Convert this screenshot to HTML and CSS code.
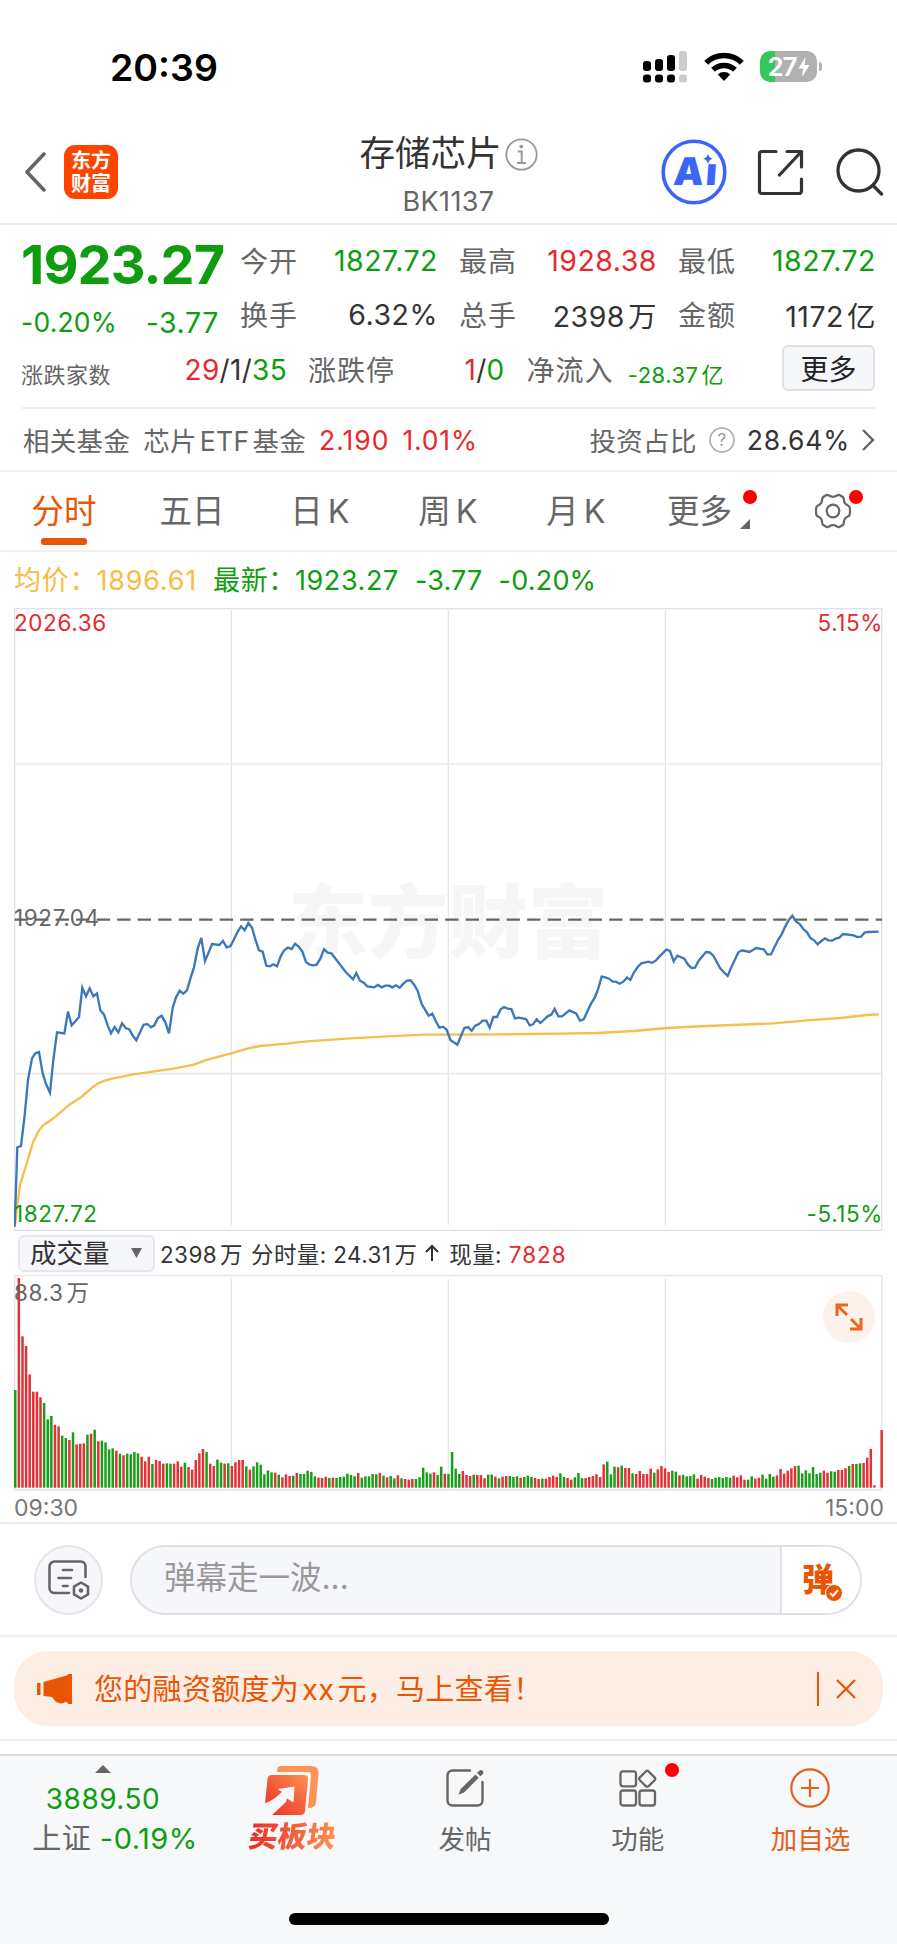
FILE: index.html
```html
<!DOCTYPE html>
<html lang="zh-CN">
<head>
    <meta charset="UTF-8">
    <meta name="viewport" content="width=device-width, initial-scale=1.0">
    <title>存储芯片 BK1137</title>
    <link rel="stylesheet" href="styles.css">
</head>
<body>

    <!-- Status bar -->
    <div class="status-bar">
        <span class="clock">20:39</span>
        <div class="status-icons">
            <svg class="signal" width="44" height="32" viewBox="0 0 44 32">
                <g fill="#000">
                    <rect x="0" y="10" width="8" height="10" rx="3"/>
                    <rect x="12" y="8" width="8" height="12" rx="3"/>
                    <rect x="24" y="4" width="8" height="16" rx="3"/>
                    <rect x="0" y="23.500" width="8" height="8" rx="3"/>
                    <rect x="12" y="23.500" width="8" height="8" rx="3"/>
                    <rect x="24" y="23.500" width="8" height="8" rx="3"/>
                </g>
                <g fill="#ccc">
                    <rect x="36" y="0" width="8" height="20" rx="3"/>
                    <rect x="36" y="23.500" width="8" height="8" rx="3"/>
                </g>
            </svg>
            <svg class="wifi" width="40" height="29" viewBox="0 0 40 29">
                <g fill="none" stroke="#000" stroke-width="5.5">
                    <path d="M2.2 10.8a25.5 25.5 0 0 1 35.6 0"/>
                    <path d="M9 17.8a16 16 0 0 1 22 0"/>
                </g>
                <path d="M20 29l-6.2-6.4a9 9 0 0 1 12.4 0z"/>
            </svg>
            <div class="battery">
                <span>27</span>
                <svg width="12" height="20" viewBox="0 0 11 20"><path d="M7 0L0 11.5h4.6L3.6 20 11 8H6.2z" fill="#fff"/></svg>
            </div>
        </div>
    </div>

    <!-- Header -->
    <header class="header">
        <div class="header-left">
            <svg width="22" height="40" viewBox="0 0 22 40"><path d="M20 2L3 20l17 18" fill="none" stroke="#666" stroke-width="3.6" stroke-linecap="round" stroke-linejoin="round"/></svg>
            <div class="app-logo">东方<br>财富</div>
        </div>
        <div class="header-title">
            <h1>存储芯片
                <svg width="33" height="33" viewBox="0 0 33 33">
                    <circle cx="16.5" cy="16.5" r="15.2" fill="none" stroke="#999" stroke-width="1.8"/>
                    <circle cx="16.3" cy="8.6" r="1.9" fill="#999"/>
                    <path d="M12.8 13.4h3.9v11.4M12 24.9h9" fill="none" stroke="#999" stroke-width="2"/>
                </svg>
            </h1>
            <p>BK1137</p>
        </div>
        <div class="header-right">
            <svg width="66" height="66" viewBox="0 0 66 66">
                <circle cx="33" cy="33" r="30.8" fill="none" stroke="#3a66f5" stroke-width="3.6"/>
                <text class="ai-text" x="12" y="46" transform="skewX(-4) translate(3 0)">Aı</text>
                <path d="M47 14.500c.8 3.200 1.800 4.300 5 5.200-3.200.9-4.200 2-5 5.200-.8-3.200-1.800-4.300-5-5.200 3.200-.9 4.200-2 5-5.200z" fill="#3a66f5"/>
            </svg>
            <svg class="share" width="48" height="48" viewBox="0 0 48 48">
                <path d="M19 3.500H5a2.500 2.500 0 0 0-2.500 2.500v37A2.500 2.500 0 0 0 5 45.500h37a2.500 2.500 0 0 0 2.500-2.500V31M30 3.500h14.500V19M44 4L22.500 27" fill="none" stroke="#333" stroke-width="3.200" stroke-linecap="round" stroke-linejoin="round"/>
            </svg>
            <svg width="48" height="48" viewBox="0 0 48 48">
                <g fill="none" stroke="#333" stroke-width="3.300" stroke-linecap="round"><circle cx="22.500" cy="22.500" r="20.500"/><path d="M37 37.500l8.500 8.500"/></g>
            </svg>
        </div>
    </header>

    <!-- Quote -->
    <section class="quote">
        <div class="quote-main">
            <div class="price-box">
                <div class="price">1923.27</div>
                <div class="change"><span>-0.20%</span><span class="change-value">-3.77</span></div>
            </div>
            <div class="quote-grid">
                <div class="cell"><label>今开</label><span class="green">1827.72</span></div>
                <div class="cell"><label>最高</label><span class="red">1928.38</span></div>
                <div class="cell"><label>最低</label><span class="green">1827.72</span></div>
                <div class="cell"><label>换手</label><span>6.32%</span></div>
                <div class="cell"><label>总手</label><span>2398<i class="thin"></i>万</span></div>
                <div class="cell"><label>金额</label><span>1172<i class="thin"></i>亿</span></div>
            </div>
        </div>
        <div class="quote-extra">
            <div class="cell updown"><label class="small">涨跌家数</label><span class="ratio"><b class="red">29</b>/1/<b class="green">35</b></span></div>
            <div class="cell limit"><label>涨跌停</label><span class="ratio"><b class="red">1</b>/<b class="green">0</b></span></div>
            <div class="cell flow"><label>净流入</label><span class="green small">-28.37<i class="thin"></i>亿</span></div>
            <button class="more-btn">更多</button>
        </div>
        <div class="fund">
            <span class="fund-label">相关基金</span>
            <span class="fund-name">芯片<i class="thin"></i>ETF<i class="thin"></i>基金</span>
            <span class="red fund-price">2.190</span>
            <span class="red num">1.01%</span>
            <span class="fund-ratio">投资占比</span>
            <svg class="help" width="26" height="26" viewBox="0 0 26 26">
                <circle cx="13" cy="13" r="12" fill="none" stroke="#aaa" stroke-width="1.600"/>
                <text x="13" y="18.500" text-anchor="middle" class="help-text">?</text>
            </svg>
            <span class="dark num">28.64%</span>
            <svg class="fund-arrow" width="14" height="24" viewBox="0 0 14 24"><path d="M2 2l10 10L2 22" fill="none" stroke="#666" stroke-width="2.400"/></svg>
        </div>
    </section>

    <!-- Period tabs -->
    <nav class="tabs">
        <a class="tab active">分时</a>
        <a class="tab">五日</a>
        <a class="tab">日<i class="thin"></i>K</a>
        <a class="tab">周<i class="thin"></i>K</a>
        <a class="tab">月<i class="thin"></i>K</a>
        <a class="tab tab-more">更多
            <svg class="corner" width="10" height="10" viewBox="0 0 10 10"><path d="M10 0v10H0z" fill="#666"/></svg>
            <i class="dot"></i>
        </a>
        <a class="tab tab-gear">
            <svg width="38" height="36" viewBox="0 0 38 36">
                <path d="M12.500 2c2-.8 2.800 1.800 6.500 1.800S23.500 1.200 25.500 2l3.300 2c1.800 1.300.4 3.200 1.900 5.900s4.200 2 4.900 4.200c.5 2.200.5 5.600 0 7.800-.7 2.200-3.400 1.500-4.900 4.200s-.1 4.600-1.900 5.900l-3.300 2c-2 .8-2.800-1.800-6.500-1.800S14.500 34.800 12.500 34l-3.300-2c-1.800-1.300-.4-3.200-1.900-5.900s-4.200-2-4.900-4.200c-.5-2.200-.5-5.600 0-7.800.7-2.200 3.400-1.500 4.900-4.200S7.400 5.300 9.200 4z" fill="none" stroke="#666" stroke-width="2.200"/>
                <circle cx="19" cy="18" r="6.300" fill="none" stroke="#666" stroke-width="2.200"/>
            </svg>
            <i class="dot"></i>
        </a>
    </nav>

    <!-- Intraday chart -->
    <div class="legend">
        <span class="avg">均价：</span><span class="avg avg-value">1896.61</span>
        <span class="green">最新：</span><span class="green">1923.27</span>
        <span class="green diff">-3.77</span>
        <span class="green diff">-0.20%</span>
    </div>

    <div class="price-chart">
        <svg width="869" height="623" viewBox="0 0 2607 1869">
            <text class="watermark" x="822" y="1030">东方财富</text>
            <g fill="none" stroke="#dfe2ea" stroke-width="4">
                <path d="M652 6V1851M1303 6V1851M1954 6V1851" stroke="#e3e5ec"/>
                <path d="M2 468H2604M2 1397H2604" stroke="#e8eaf0" stroke-width="5"/>
                <rect x="2" y="2" width="2601" height="1865"/>
            </g>
            <path d="M2 935H2604" stroke="#666" stroke-width="7" stroke-dasharray="40 21.500" fill="none"/>
            <polyline id="avgLine" fill="none" stroke="#f7bd4f" stroke-width="7" stroke-linejoin="round"/>
            <polyline id="priceLine" fill="none" stroke="#3c76bb" stroke-width="7"/>
        </svg>
        <span class="axis top left red">2026.36</span>
        <span class="axis top right red">5.15%</span>
        <span class="axis middle left">1927.04</span>
        <span class="axis bottom left green">1827.72</span>
        <span class="axis bottom right green">-5.15%</span>
    </div>

    <!-- Volume -->
    <div class="volume-bar">
        <button class="volume-btn">成交量 <svg width="11" height="10" viewBox="0 0 11 10"><path d="M0 0h11L5.500 10z" fill="#666"/></svg></button>
        <span>2398<i class="thin"></i>万</span>
        <span>分时量: 24.31<i class="thin"></i>万</span>
        <svg class="up" width="14" height="18" viewBox="0 0 14 18"><path d="M7 17V2M1 8l6-6 6 6" fill="none" stroke="#333" stroke-width="2"/></svg>
        <span>现量: <b class="red">7828</b></span>
    </div>

    <div class="volume-chart">
        <span class="axis vol-max left">88.3<i class="thin"></i>万</span>
        <svg width="869" height="216" viewBox="0 0 2607 648">
            <g fill="none" stroke="#e3e5ec" stroke-width="4">
                <path d="M652 12V640M1303 12V640M1954 12V640"/>
                <path d="M2 2H2603V645H2z"/>
            </g>
            <g id="volumeBars"></g>
        </svg>
        <div class="expand">
            <svg width="28" height="28" viewBox="0 0 28 28"><path d="M12 12L3 3M2 13V2h11M16 16l9 9M26 15v11H15" fill="none" stroke="#e8681f" stroke-width="3"/></svg>
        </div>
    </div>
    <div class="time-axis"><span>09:30</span><span>15:00</span></div>

    <!-- Bullet comments -->
    <div class="danmu">
        <div class="danmu-setting">
            <svg width="42" height="40" viewBox="0 0 42 40">
                <g fill="none" stroke="#666" stroke-width="2.600" stroke-linecap="round">
                    <path d="M21 33H6.500A5 5 0 0 1 1.500 28V6.500a5 5 0 0 1 5-5h26a5 5 0 0 1 5 5V17"/>
                    <path d="M15 10h9M10.500 18h12.500M15 26h4.500"/>
                    <path d="M33 22.500l7 4.200v7.600l-7 4.200-7-4.200v-7.600z" stroke-linejoin="round"/>
                </g>
                <circle cx="33" cy="30.500" r="2.300" fill="#666"/>
            </svg>
        </div>
        <div class="danmu-input">
            <span class="placeholder">弹幕走一波...</span>
            <div class="danmu-toggle">弹
                <svg width="18" height="18" viewBox="0 0 18 18"><circle cx="9" cy="9" r="8.500" fill="#ea5504" stroke="#fff"/><path d="M5 9l3 3 5-6" fill="none" stroke="#fff" stroke-width="2"/></svg>
            </div>
        </div>
    </div>

    <!-- Notice -->
    <div class="notice-wrap">
        <div class="notice">
            <svg width="35" height="30" viewBox="0 0 35 30"><path d="M0 9h3.500v12H0zM6.500 8L31 1V0h4v30h-4v-1l-3-1.300c-2 2.600-6 1.800-8.500.3-2-1-2.500-3-4.500-5L6.500 22z" fill="#ea5504"/></svg>
            <span>您的融资额度为<i class="thin"></i>xx<i class="thin"></i>元，马上查看！</span>
            <i class="notice-line"></i>
            <svg class="close" width="20" height="20" viewBox="0 0 20 20"><path d="M1 1l18 18M19 1L1 19" stroke="#ea5504" stroke-width="2.200"/></svg>
        </div>
    </div>

    <!-- Bottom bar -->
    <footer class="bottom-bar">
        <div class="index-box">
            <svg width="16" height="8" viewBox="0 0 16 8"><path d="M8 0l8 8H0z" fill="#666"/></svg>
            <p class="green">3889.50</p>
            <p>上证 <span class="green">-0.19%</span></p>
        </div>
        <div class="item buy">
            <svg width="56" height="50" viewBox="0 0 56 50">
                <defs>
                    <linearGradient id="buyGrad" x1="0" y1="1" x2="1" y2="0">
                        <stop offset="0" stop-color="#ec2b27"/>
                        <stop offset="1" stop-color="#fb9250"/>
                    </linearGradient>
                </defs>
                <path d="M16 0h31q8 0 7.500 7L52 36q-.4 6-8 6l3-32q.3-4-3.500-4H13q.3-6 3-6z" fill="#fc9455"/>
                <path d="M8 9h32q4.500 0 4 4.500L41 45q-.4 4-4.500 4H8l14-13 1-3.500 6.500 4L30.500 20.500 14 23l4 3C13 31 6 36 1 37L3.500 13Q4 9 8 9z" fill="url(#buyGrad)"/>
            </svg>
            <span>买板块</span>
        </div>
        <div class="item">
            <svg width="40" height="40" viewBox="0 0 40 40">
                <path d="M25 2.500H7.500a5 5 0 0 0-5 5v25a5 5 0 0 0 5 5h25a5 5 0 0 0 5-5V14" fill="none" stroke="#666" stroke-width="2.400" stroke-linecap="round"/>
                <path d="M30.500 6.500l3.300 3.300L19 24.500l-5.500 2.300 2-5.500zM32 5l2.500-2.500q2-1 3.200.3t.3 3.200L35.300 8.300z" fill="#666"/>
            </svg>
            <span>发帖</span>
        </div>
        <div class="item">
            <svg width="40" height="40" viewBox="0 0 40 40">
                <g fill="none" stroke="#666" stroke-width="2.300">
                    <rect x="2.500" y="3.300" width="15.500" height="15" rx="2.500"/>
                    <rect x="2.500" y="22.500" width="15.500" height="15" rx="2.500"/>
                    <rect x="21.500" y="22.500" width="15.500" height="15" rx="2.500"/>
                    <rect x="23" y="4.600" width="12.400" height="12.400" rx="2" transform="rotate(45 29.200 10.800)"/>
                </g>
            </svg>
            <i class="dot"></i>
            <span>功能</span>
        </div>
        <div class="item add">
            <svg width="40" height="40" viewBox="0 0 40 40">
                <circle cx="20" cy="20" r="18.700" fill="none" stroke="#e2601c" stroke-width="2.200"/>
                <path d="M20 11v18M11 20h18" stroke="#e2601c" stroke-width="2.200"/>
            </svg>
            <span>加自选</span>
        </div>
        <div class="home-indicator"></div>
    </footer>

    <script src="chart.js"></script>
</body>
</html>
```
FILE: styles.css
```css
* {
    margin: 0;
    padding: 0;
    box-sizing: border-box;
}

body {
    width: 897px;
    height: 1944px;
    overflow: hidden;
    background-color: #fff;
    color: #333;
    font-family: Inter, "Noto Sans CJK SC", sans-serif;
    font-size: 28px;
}

svg {
    display: block;
    flex: none;
}

b, i {
    font-weight: normal;
    font-style: normal;
}

/* gap between latin and chinese characters */
.thin {
    display: inline-block;
    width: 3px;
}

.green {
    color: #0f9d0f;
}

.red {
    color: #e6292d;
}

.dark {
    color: #333;
}

.dot {
    position: absolute;
    width: 14px;
    height: 14px;
    border-radius: 50%;
    background-color: #fe0000;
}

/* Status bar */
.status-bar {
    display: flex;
    justify-content: space-between;
    height: 110px;
    padding: 51px 76px 0 110px;
}

.clock {
    font-size: 37.5px;
    font-weight: 600;
    line-height: 33px;
    color: #000;
}

.status-icons {
    display: flex;
    align-items: flex-start;
    height: 32px;
}

.wifi {
    margin: 1px 16px 0 17px;
}

.battery {
    position: relative;
    display: flex;
    align-items: center;
    justify-content: center;
    gap: 1px;
    width: 57px;
    height: 31px;
    margin-right: 4px;
    border-radius: 10px;
    background: linear-gradient(to right, #34c759 15px, #b1b1b1 15px);
    color: #fff;
    font-size: 26px;
    font-weight: 600;
    letter-spacing: -1px;
}

.battery::after {
    content: "";
    position: absolute;
    right: -5px;
    top: 11px;
    width: 3px;
    height: 9px;
    border-radius: 0 3px 3px 0;
    background-color: #b1b1b1;
}

/* Header */
.header {
    display: grid;
    grid-template-columns: 1fr auto 1fr;
    height: 115px;
    padding: 0 13px 0 24px;
    border-bottom: 2px solid #ececee;
}

.header-left {
    display: flex;
    align-items: center;
    gap: 18px;
    height: 124px;
}

.app-logo {
    width: 54px;
    height: 54px;
    padding-top: 5px;
    border-radius: 11px;
    background-color: #ff4400;
    color: #fff;
    font-size: 20px;
    font-weight: bold;
    line-height: 23px;
    text-align: center;
}

.header-title {
    padding-top: 22px;
    text-align: center;
}

.header-title h1 {
    display: flex;
    align-items: center;
    gap: 3px;
    margin-left: -11px;
    font-size: 35.5px;
    font-weight: normal;
    line-height: 44px;
}

.header-title p {
    margin-left: -11px;
    color: #666;
    font-size: 27px;
    letter-spacing: 0.4px;
    line-height: 51px;
}

.header-right {
    display: flex;
    align-items: center;
    justify-content: flex-end;
    height: 124px;
}

.share {
    margin: 0 31px 0 30px;
}

.ai-text {
    font-size: 38px;
    font-weight: 900;
    fill: #3a66f5;
    letter-spacing: 2px;
}

/* Quote */
.quote {
    padding: 0 22px;
    border-bottom: 2px solid #f2f2f4;
    height: 247px;
}

.quote-main {
    display: flex;
    height: 118px;
}

.price-box {
    width: 218px;
    padding-top: 9px;
    color: #0f9d0f;
}

.price {
    margin-left: -1px;
    font-size: 54px;
    font-weight: 700;
    line-height: 62px;
    letter-spacing: -0.9px;
}

.change {
    display: flex;
    justify-content: space-between;
    width: 198px;
    padding-top: 8px;
    font-size: 26.5px;
    line-height: 36px;
    letter-spacing: 0.2px;
    margin-left: -1px;
}

.change-value {
    padding-top: 1px;
    font-size: 28.5px;
    letter-spacing: 0.6px;
}

.quote-grid {
    display: grid;
    flex: none;
    grid-template-columns: repeat(3, 196px);
    grid-auto-rows: 54px;
    column-gap: 23px;
    padding-top: 8px;
}

.cell {
    display: flex;
    justify-content: space-between;
    align-items: center;
    white-space: nowrap;
}

.cell label {
    padding-bottom: 1px;
    color: #666;
    letter-spacing: 1px;
}

.cell span {
    margin-right: -2px;
    font-size: 28.5px;
    letter-spacing: 0.5px;
}

.cell .ratio {
    font-size: 28px;
    letter-spacing: 0.3px;
}

.cell .small {
    padding-top: 7px;
    font-size: 22px;
    letter-spacing: 0.5px;
}

.cell label.small {
    margin-left: -1px;
}

.quote-extra {
    display: flex;
    gap: 23px;
    height: 64px;
    padding-bottom: 11px;
}

.updown {
    width: 265px;
}

.limit {
    width: 196px;
}

.flow {
    width: 198px;
    padding-left: 1px;
}

.more-btn {
    width: 93px;
    height: 46px;
    margin: 2px 0 0 37px;
    border: 2px solid #dfe1e7;
    border-radius: 6px;
    background-color: #f6f7fa;
    color: #222;
    font-family: inherit;
    font-size: 28px;
    flex: none;
}

.fund {
    display: flex;
    align-items: center;
    height: 63px;
    border-top: 2px solid #eeeef0;
    color: #666;
    font-size: 26.5px;
    letter-spacing: 0.3px;
    white-space: nowrap;
}

.fund-label {
    margin: 0 13px 0 1px;
}

.num {
    letter-spacing: 0.8px;
}

.fund-price {
    margin: 0 13px 0 13px;
    letter-spacing: 1px;
}

.fund-ratio {
    margin-left: auto;
}

.help {
    margin: 0 12px;
}

.help-text {
    font-size: 17px;
    fill: #999;
}

.fund-arrow {
    margin-left: 11px;
}

/* Tabs */
.tabs {
    display: flex;
    height: 80px;
    border-bottom: 2px solid #f0f0f2;
    color: #666;
    font-size: 32.5px;
    line-height: 80px;
}

.tab {
    position: relative;
    width: 128px;
    text-align: center;
}

.tab .thin {
    width: 5px;
}

.tab.active {
    color: #ea5504;
}

.tab.active::after {
    content: "";
    position: absolute;
    left: 41px;
    bottom: 5px;
    width: 46px;
    height: 7px;
    border-radius: 3px;
    background-color: #ea5504;
}

.tab-more {
    padding-right: 13px;
    width: 132px;
}

.corner {
    position: absolute;
    right: 22px;
    top: 47px;
}

.tab-more .dot {
    right: 15px;
    top: 18px;
}

.tab-gear {
    width: 125px;
    padding: 21px 0 0 42px;
}

.tab-gear .dot {
    right: 34px;
    top: 18px;
}

/* Legend */
.legend {
    display: flex;
    height: 56px;
    padding-left: 14px;
    font-size: 27px;
    letter-spacing: 0.6px;
    line-height: 57px;
    white-space: nowrap;
}

.legend span + span {
    margin-left: 16px;
}

.legend .avg {
    color: #f9bb46;
    letter-spacing: 0.8px;
}

.legend .avg-value, .legend .avg-value + span + span {
    margin-left: -1px;
}

.legend .diff {
    letter-spacing: 0.2px;
}

/* Charts */
.price-chart, .volume-chart {
    position: relative;
    margin-left: 14px;
    width: 869px;
}

.axis {
    position: absolute;
    color: #666;
    font-size: 22.5px;
    letter-spacing: 0.6px;
    line-height: 26px;
}

.axis.red {
    color: #e6292d;
}

.axis.green {
    color: #0f9d0f;
}

.left {
    left: 0;
}

.right {
    right: 0;
}

.top {
    top: 2px;
}

.middle {
    top: 297px;
}

.bottom {
    bottom: 4px;
}

.watermark {
    font-size: 240px;
    font-weight: 900;
    fill: #f6f6f7;
}

.volume-bar {
    display: flex;
    align-items: center;
    gap: 8px;
    height: 44px;
    padding-left: 18px;
    font-size: 22.5px;
    letter-spacing: 0.4px;
    white-space: nowrap;
}

.volume-bar .red {
    letter-spacing: 1px;
}

.volume-btn {
    display: flex;
    align-items: center;
    justify-content: space-between;
    width: 137px;
    height: 37px;
    margin-right: -3px;
    padding: 0 11px 0 10px;
    border: 2px solid #e5e7ec;
    border-radius: 6px;
    background-color: #f6f7fa;
    color: #333;
    font-family: inherit;
    font-size: 26.5px;
    line-height: 32px;
}

.up {
    margin-right: 2px;
}

.vol-max {
    top: 5px;
}

.expand {
    position: absolute;
    top: 16px;
    right: 8px;
    display: flex;
    align-items: center;
    justify-content: center;
    width: 52px;
    height: 52px;
    border-radius: 50%;
    background-color: #fdf1eb;
}

.time-axis {
    display: flex;
    justify-content: space-between;
    height: 33px;
    padding: 0 13px 0 14px;
    border-bottom: 2px solid #ececee;
    color: #777;
    font-size: 23px;
    line-height: 34px;
}

/* Bullet comments */
.danmu {
    display: flex;
    align-items: center;
    gap: 27px;
    height: 113px;
    padding: 0 34px;
    border-bottom: 2px solid #f2f2f4;
}

.danmu-setting {
    display: flex;
    align-items: center;
    justify-content: center;
    width: 69px;
    height: 70px;
    border: 2px solid #e3e5ea;
    border-radius: 50%;
    background-color: #f6f7fa;
}

.danmu-input {
    display: flex;
    width: 732px;
    height: 70px;
    border: 2px solid #dfe1e7;
    border-radius: 35px;
    background-color: #f6f7fa;
    overflow: hidden;
}

.placeholder {
    flex: 1;
    padding-left: 32px;
    color: #999;
    font-size: 31.5px;
    line-height: 61px;
}

.danmu-toggle {
    position: relative;
    width: 80px;
    padding-left: 20px;
    border-left: 2px solid #dfe1e7;
    background-color: #fff;
    color: #ea5504;
    font-size: 32px;
    font-weight: 900;
    line-height: 65px;
}

.danmu-toggle svg {
    position: absolute;
    left: 43px;
    top: 37px;
}

/* Notice */
.notice-wrap {
    height: 104px;
    padding: 14px 14px 0;
    border-bottom: 2px solid #ececee;
}

.notice {
    display: flex;
    align-items: center;
    height: 75px;
    padding: 0 27px 0 23px;
    border-radius: 34px;
    background-color: #fdeee5;
    color: #ea5504;
    font-size: 29px;
}

.notice span {
    flex: 1;
    padding: 0 0 3px 22px;
    letter-spacing: 0.3px;
}

.notice-line {
    width: 2px;
    height: 34px;
    margin-right: 17px;
    background-color: #ea5504;
}

/* Bottom bar */
.bottom-bar {
    position: relative;
    display: flex;
    height: 190px;
    margin-top: 13px;
    border-top: 2px solid #dedfe2;
    background-color: #f6f8fa;
    color: #666;
}

.index-box {
    display: flex;
    flex-direction: column;
    align-items: center;
    width: 206px;
    padding-top: 9px;
}

.index-box p {
    line-height: 40px;
    letter-spacing: 0.5px;
    white-space: nowrap;
}

.index-box p:nth-of-type(1) {
    padding-top: 6px;
}

.index-box p:nth-of-type(2) {
    padding-left: 24px;
    font-size: 29px;
}

.item {
    position: relative;
    display: flex;
    flex-direction: column;
    align-items: center;
    width: 172.700px;
    padding-top: 12px;
    font-size: 26.5px;
}

.item span {
    line-height: 40px;
    padding-top: 11px;
}

.item .dot {
    left: 114px;
    top: 7px;
}

.buy {
    padding-top: 10px;
}

.buy span {
    padding-top: 1px;
    font-size: 29px;
    font-weight: 900;
    background: linear-gradient(to right, #ec2b27, #fb9250);
    -webkit-background-clip: text;
    background-clip: text;
    color: transparent;
    transform: skewX(-8deg);
}

.add {
    color: #e2601c;
}

.home-indicator {
    position: absolute;
    left: 289px;
    bottom: 19px;
    width: 320px;
    height: 12px;
    border-radius: 6px;
    background-color: #000;
}
```
FILE: chart.js
```js
// line points are [x, y] pairs on a 2607 x 1869 grid, shifted by the plot origin
const price = "44,1040 52,802 63,798 74,706 84,600 96,535 106,520 117,516 128,580 138,612 150,638 160,540 171,457 193,460 204,395 215,436 226,424 237,411 247,323 258,349 269,325 280,349 291,340 301,391 312,404 323,436 333,460 344,441 355,457 366,430 377,444 388,448 399,468 409,481 420,457 431,434 442,432 453,442 463,436 474,414 485,407 496,427 507,460 518,384 528,352 539,332 550,341 561,331 572,293 582,262 593,206 604,174 615,243 626,217 636,192 658,195 669,183 680,202 691,199 701,180 712,157 723,139 734,151 745,129 756,143 766,178 777,211 788,215 799,257 810,259 820,253 831,259 842,229 853,210 864,203 875,207 885,191 896,200 907,215 918,246 929,254 940,256 950,254 961,236 972,208 983,218 994,220 1005,234 1037,276 1059,298 1069,279 1080,302 1091,308 1102,319 1123,322 1134,315 1145,322 1156,317 1167,317 1177,322 1188,316 1199,323 1210,311 1221,302 1232,301 1243,315 1253,333 1265,372 1286,407 1297,401 1307,423 1318,443 1329,440 1340,449 1351,480 1372,494 1393,444 1404,441 1415,452 1426,437 1437,432 1448,422 1459,422 1469,443 1480,411 1491,411 1502,388 1512,381 1523,386 1534,387 1545,415 1556,413 1578,417 1589,436 1599,433 1610,418 1621,429 1643,409 1654,404 1664,387 1675,409 1686,409 1708,391 1729,401 1740,422 1751,418 1773,371 1784,354 1795,325 1805,290 1816,292 1827,296 1838,305 1848,305 1859,311 1870,305 1881,293 1891,300 1902,277 1913,261 1924,250 1945,245 1956,248 1967,242 1978,230 1999,209 2010,213 2021,244 2032,227 2053,236 2064,254 2075,264 2085,263 2096,242 2118,216 2129,217 2140,227 2161,266 2183,288 2194,262 2215,217 2226,211 2248,216 2269,204 2291,208 2302,223 2313,223 2334,180 2345,163 2356,139 2367,119 2377,107 2388,124 2399,132 2410,147 2421,157 2431,174 2442,181 2453,193 2464,183 2475,175 2485,181 2496,182 2507,176 2518,173 2529,162 2561,166 2572,171 2583,170 2594,158 2605,156 2636,155";
const average = "46,1030 52,970 60,915 80,850 100,785 115,755 128,737 160,715 210,673 245,650 280,620 295,610 310,603 340,595 400,583 520,566 582,554 615,541 693,520 745,505 780,498 860,491 920,484 1040,476 1160,469 1280,464 1345,464 1501,463 1681,461 1791,459 1901,453 2001,444 2121,438 2321,430 2421,421 2521,414 2601,405 2636,403";

function drawLine(id, data) {
    const points = data.split(" ").map(p => {
        const [x, y] = p.split(",").map(Number);
        return (x - 42) + "," + (y + 816);
    });
    document.getElementById(id).setAttribute("points", points.join(" "));
}

drawLine("avgLine", average);
drawLine("priceLine", price);

// one bar per minute: g = down, r = up, number = bar top
const volume = "g510 r174 r349 r378 r463 r515 r515 r532 g549 g598 g588 r614 r619 g647 g654 r660 g637 r673 r671 r670 g644 r641 g629 r664 g662 g667 g688 g685 r692 g701 r706 g701 g703 g696 g700 r710 r724 r710 g732 r720 r723 r731 g730 g731 r731 r724 r740 g728 r741 r749 r720 r700 r687 g696 r731 r738 g719 g728 r731 g730 r738 r727 r720 r720 g739 r749 g739 g727 g734 g763 g751 g757 r758 g764 r772 r763 r768 g767 r759 g762 g762 g752 g756 g769 r773 r774 r770 g774 r773 g774 g771 g770 g761 g765 g769 r759 g773 g769 g769 g762 g763 r759 g767 r772 g768 g775 r766 g775 r777 r779 r777 g777 g772 g743 g757 g761 r757 g765 g740 r761 g762 g696 g746 g762 r753 r765 r768 g764 r765 r765 r775 g764 g764 r770 g775 r770 r768 g768 g771 g769 r773 g771 g767 g771 r774 r777 g776 r776 r771 r767 r771 g760 g771 r774 r779 g772 g759 g774 r774 r771 r768 r763 r771 r733 g725 g763 g740 r742 g737 r744 r744 g760 r762 r753 r762 r762 r746 g758 r748 r738 r745 r756 g752 g755 r766 g765 g769 g768 g763 r776 r765 r770 r774 g777 g773 g771 g774 g771 g773 r767 r772 r766 r779 g779 g769 r776 r773 g764 g776 g762 g770 r766 r747 r761 r752 r745 r738 g737 g760 g751 g760 g741 g762 g758 r752 r758 g754 g755 r750 r750 r745 g738 r732 g732 g730 r729 r713 r687 r796 r803 r630";

const bars = document.getElementById("volumeBars");
volume.split(" ").forEach((v, i) => {
    const top = Number(v.slice(1));
    const rect = document.createElementNS("http://www.w3.org/2000/svg", "rect");
    rect.setAttribute("x", (i * 10.83).toFixed(1));
    rect.setAttribute("y", top - 165);
    rect.setAttribute("width", 7.5);
    rect.setAttribute("height", 803 - top);
    rect.setAttribute("fill", v[0] === "g" ? "#1a9e1a" : "#e23237");
    bars.appendChild(rect);
});
```
